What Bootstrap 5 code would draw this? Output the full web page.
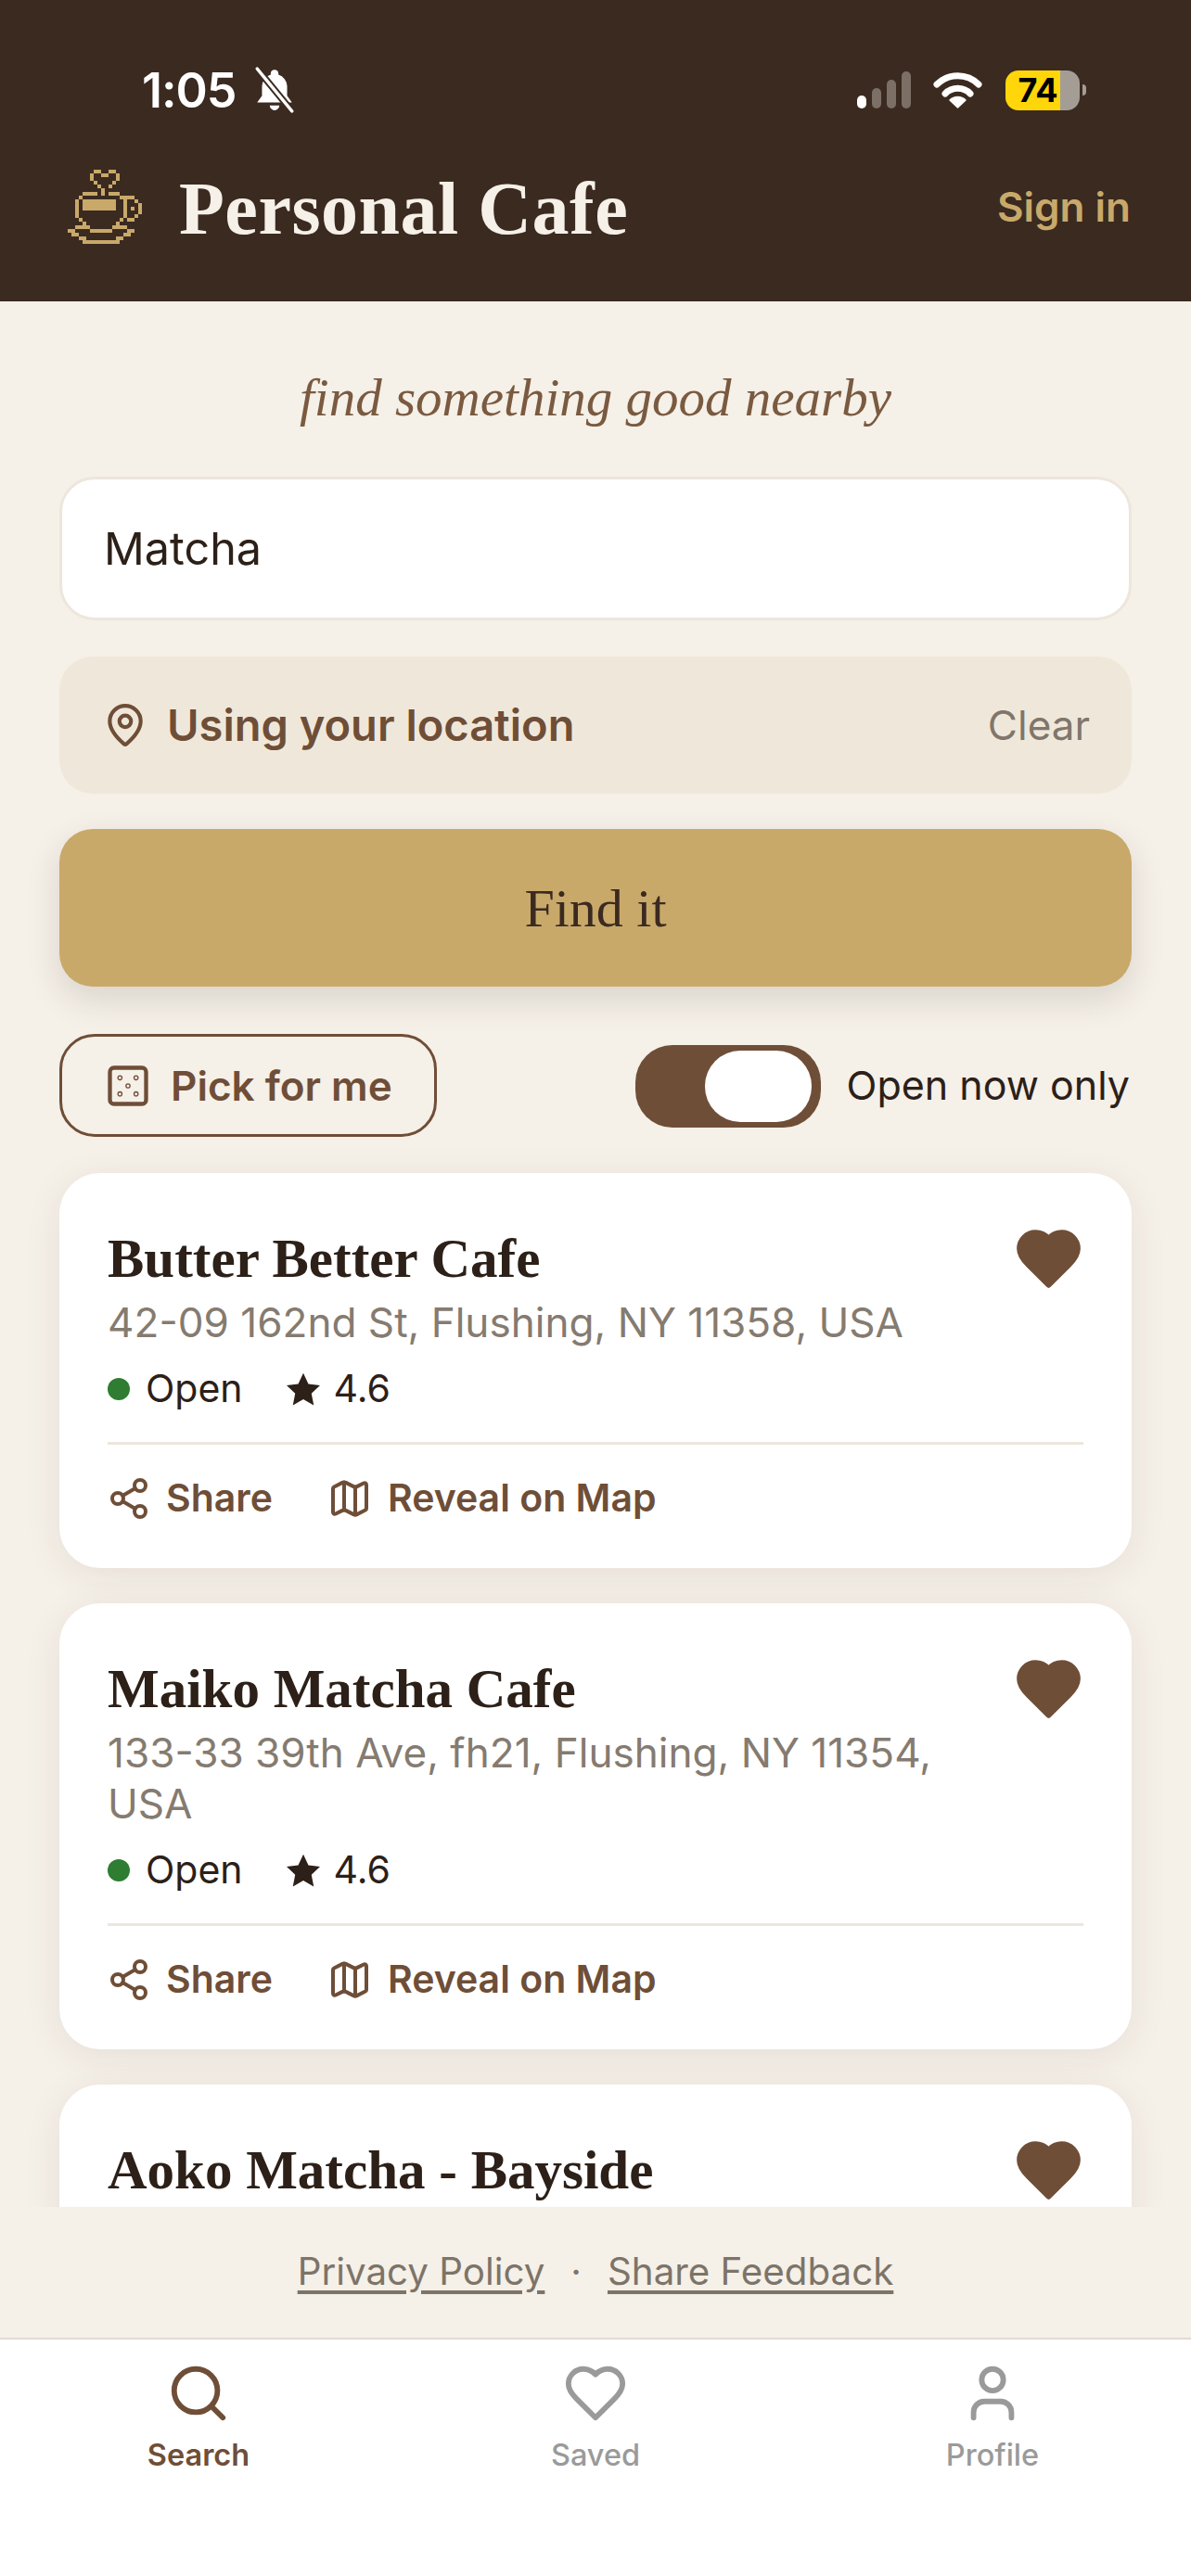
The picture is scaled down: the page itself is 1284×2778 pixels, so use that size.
<!DOCTYPE html>
<html lang="en">
<head>
  <meta charset="UTF-8">
  <title>Personal Cafe</title>
  <meta name="viewport" content="width=device-width, initial-scale=1" />
  <link rel="stylesheet" href="https://cdn.jsdelivr.net/npm/bootstrap@5.3.0/dist/css/bootstrap.min.css">
  <style>
    html, body { height: 2778px; overflow: hidden; }
    body { background: #f5f0e8; font-family: Inter, "Liberation Sans", sans-serif; color: #2c2018; }
    .serif { font-family: "Liberation Serif", serif; }
    .ico { fill: none; stroke: currentColor; stroke-width: 2; stroke-linecap: round; stroke-linejoin: round; flex-shrink: 0; }

    .app-shell { height: 2778px; }
    .top-bar { height: 325px; background: #3b2a20; color: #f5f0e8; }
    .status-row { height: 50px; margin-top: 72px; padding: 0 0 0 153px; }
    .status-time { font-size: 52px; font-weight: 600; line-height: 50px; letter-spacing: -1px; color: #fff; padding-top: 2px; }
    .signal-bar { width: 10px; border-radius: 5px; background: #7c6f66; }
    .batt { width: 80px; height: 43px; border-radius: 14px; overflow: hidden; background: linear-gradient(90deg, #ffd60a 74%, #a39d96 74%); color: #000; font-size: 36px; font-weight: 700; line-height: 43px; }
    .batt-nub { width: 4px; height: 12px; border-radius: 0 4px 4px 0; background: #a39d96; margin-left: 3px; }
    .brand-row { height: 80px; margin-top: 61px; padding: 0 65px 0 73px; }
    .brand-title { font-size: 80px; font-weight: 700; line-height: 80px; margin-left: 40px; padding-top: 4px; letter-spacing: .5px; }
    .sign-in { color: #c8a96a; font-size: 44px; font-weight: 600; text-decoration: none; }

    .scroll-area { height: 2055px; overflow: hidden; padding: 0 64px; }
    .tagline { font-size: 57px; font-style: italic; line-height: 80px; margin: 64px 0 45px; color: #7a5a40; }
    .search-input.form-control { height: 155px; border: 3px solid #ede6dc; border-radius: 38px; padding: 0 45px; font-size: 48.500px; color: #2c2018; background: #fff; }
    .loc-bar { height: 148px; margin-top: 39px; padding: 0 45px 0 46px; border-radius: 36px; background: #efe8da; color: #6f4e37; }
    .loc-text { font-size: 47px; font-weight: 600; margin-left: 20px; }
    .clear-link { font-size: 44px; color: #80766b; }
    .find-btn.btn { height: 170px; margin-top: 38px; border: 0; border-radius: 36px; background: #c8a96a; color: #3b2a20; font-size: 58px; box-shadow: 0 14px 36px rgba(59, 42, 32, .14); }
    .tools-row { height: 111px; margin-top: 51px; }
    .pick-btn.btn { height: 111px; width: 407px; padding: 0 0 0 45px; border: 3px solid #6f4e37; border-radius: 38px; color: #6f4e37; font-size: 44px; font-weight: 600; background: transparent; }
    .pick-btn span { margin-left: 20px; }
    .open-toggle { width: 200px; height: 89px; margin-top: 2px; border-radius: 40px; background: #6f4e37; position: relative; flex-shrink: 0; }
    .open-toggle::after { content: ""; position: absolute; right: 10px; top: 6px; width: 115px; height: 77px; border-radius: 38px; background: #fff; }
    .open-label { font-size: 43px; margin-left: 28px; padding-right: 2px; }

    .cafe-card.card { border: 0; border-radius: 44px; background: #fff; box-shadow: 0 8px 40px rgba(59, 42, 32, .08); padding: 57px 52px 50px; }
    .cafe-card + .cafe-card { margin-top: 38px; }
    .first-card { margin-top: 39px; }
    .cafe-name { font-size: 59px; font-weight: 700; line-height: 70px; color: #2c2018; margin: 0; }
    .cafe-addr { font-size: 44.100px; line-height: 55px; color: #857b70; margin: 7px 0 0; }
    .cafe-meta { height: 44px; margin-top: 22px; font-size: 41px; }
    .open-dot { width: 24px; height: 24px; border-radius: 50%; background: #2e7d32; margin-right: 17px; }
    .meta-star { margin: 0 14px 0 46px; }
    .fav-heart { color: #6f4e37; fill: #6f4e37; margin: -2px 0 0 0; }
    .cafe-rule { height: 3px; background: #ede6dc; margin: 35px 0 33px; }
    .cafe-act { font-size: 41px; font-weight: 600; color: #6f4e37; height: 50px; }
    .act-share { margin: 0 16px 0 -1px; }
    .act-map { margin: 0 17px 0 59px; }

    .foot-links { height: 141px; font-size: 40.300px; color: #7d7468; gap: 28px; }
    .foot-links a { color: inherit; text-underline-offset: 6px; }
    .tab-bar { height: 257px; background: #fff; border-top: 2px solid #e0dcd6; padding-top: 23px; }
    .tab-item { width: 428px; color: #9a9a9a; font-size: 32.500px; font-weight: 500; line-height: 44px; }
    .tab-item span { margin-top: 10px; }
    .tab-item.is-active { color: #6f4e37; font-weight: 600; }
  </style>
</head>
<body>
<div class="app-shell d-flex flex-column">

  <!-- header + status bar -->
  <header class="top-bar">
    <div class="status-row d-flex align-items-center">
      <span class="status-time">1:05</span>
      <svg class="ms-3" width="50" height="50" viewBox="0 0 24 24"><path fill="#fff" d="M12 1.500a2 2 0 0 0-2 2v.6A6.500 6.500 0 0 0 5.500 10v5l-2.500 3.500h18l-2.500-3.500v-5A6.500 6.500 0 0 0 14 4.100v-.6a2 2 0 0 0-2-2zM9.500 20a2.500 2.500 0 0 0 5 0z"/><path d="M3 1l18 22" stroke="#3b2a20" stroke-width="3.500"/><path d="M3 1l18 22" stroke="#fff" stroke-width="1.600" stroke-linecap="round"/></svg>
      <div class="d-flex align-items-end ms-auto" style="gap:6px;height:40px;margin-right:24px">
        <div class="signal-bar bg-white" style="height:14px"></div>
        <div class="signal-bar" style="height:22px"></div>
        <div class="signal-bar" style="height:31px"></div>
        <div class="signal-bar" style="height:40px"></div>
      </div>
      <svg width="53" height="40" viewBox="0 0 53 40"><path d="M4 14A32 32 0 0 1 49 14" fill="none" stroke="#fff" stroke-width="7" stroke-linecap="round"/><path d="M13 24A19 19 0 0 1 40 24" fill="none" stroke="#fff" stroke-width="7" stroke-linecap="round"/><path d="M26.500 39L18 31A12 12 0 0 1 35 31z" fill="#fff" stroke="#fff" stroke-width="1.500" stroke-linejoin="round"/></svg>
      <div class="batt text-center" style="margin-left:25px"><span style="margin-right:10px">74</span></div>
      <div class="batt-nub" style="margin-right:113px"></div>
    </div>
    <div class="brand-row d-flex align-items-center">
      <svg width="80" height="80" viewBox="0 0 20 20" shape-rendering="crispEdges" fill="#c8a96a">
        <path d="M7 0h2v1h-2zM11 0h2v1h-2zM6 1h1v2h-1zM9 1h2v1h-2zM13 1h1v2h-1zM7 3h1v1h-1zM12 3h1v1h-1zM8 4h1v1h-1zM11 4h1v1h-1zM9 5h1v2h-1z"/>
        <path d="M4 6h4v1h-4zM11 6h3v1h-3zM3 7h1v1h-1zM14 7h4v1h-4zM2 8h1v5h-1zM4 8h9v3h-9zM15 8h1v5h-1zM18 8h1v1h-1zM19 9h1v3h-1zM17 10h1v1h-1zM18 12h1v1h-1zM16 13h2v1h-2zM3 13h1v1h-1zM14 13h1v1h-1zM4 14h1v1h-1zM13 14h1v1h-1z"/>
        <path d="M2 15h3v1h-3zM5 15h1v1h-1zM12 15h4v1h-4zM0 16h2v1h-2zM6 16h6v1h-6zM16 16h2v1h-2zM1 17h2v1h-2zM15 17h2v1h-2zM3 18h2v1h-2zM13 18h2v1h-2zM4 19h10v1h-10z"/>
      </svg>
      <span class="brand-title serif">Personal Cafe</span>
      <a class="sign-in ms-auto" href="#">Sign in</a>
    </div>
  </header>

  <main class="scroll-area">
    <div class="tagline serif text-center">find something good nearby</div>
    <input class="search-input form-control" type="text" value="Matcha">

    <div class="loc-bar d-flex align-items-center">
      <svg class="ico" width="50" height="50" viewBox="0 0 24 24"><path d="M20 10c0 4.993-5.539 10.193-7.399 11.799a1 1 0 0 1-1.202 0C9.539 20.193 4 14.993 4 10a8 8 0 0 1 16 0"/><circle cx="12" cy="10" r="3"/></svg>
      <span class="loc-text">Using your location</span>
      <span class="clear-link ms-auto">Clear</span>
    </div>

    <button class="find-btn btn w-100 d-block serif" type="button">Find it</button>

    <div class="tools-row d-flex align-items-center justify-content-between">
      <button class="pick-btn btn d-flex align-items-center" type="button">
        <svg class="ico" width="52" height="52" viewBox="0 0 24 24"><rect x="3" y="3" width="18" height="18" rx="2"/><circle cx="8" cy="8" r=".3"/><circle cx="16" cy="8" r=".3"/><circle cx="12" cy="12" r=".3"/><circle cx="8" cy="16" r=".3"/><circle cx="16" cy="16" r=".3"/></svg>
        <span>Pick for me</span>
      </button>
      <label class="d-flex align-items-center">
        <span class="open-toggle"></span>
        <span class="open-label">Open now only</span>
      </label>
    </div>

    <div class="cafe-card card first-card">
      <div class="d-flex justify-content-between">
        <div>
          <h2 class="cafe-name serif">Butter Better Cafe</h2>
          <p class="cafe-addr">42-09 162nd St, Flushing, NY 11358, USA</p>
          <div class="cafe-meta d-flex align-items-center">
            <span class="open-dot"></span><span>Open</span>
            <svg class="meta-star" width="38" height="36" viewBox="0 0 24 23"><path fill="#2c2018" d="M12 .5l3.500 7.500 8 1-5.900 5.500 1.600 8.200L12 18.600l-7.200 4.100 1.600-8.200L.5 9l8-1z"/></svg>
            <span>4.6</span>
          </div>
        </div>
        <svg class="ico fav-heart" width="75" height="75" viewBox="0 0 24 24"><path d="M19 14c1.490-1.460 3-3.210 3-5.500A5.500 5.500 0 0 0 16.500 3c-1.760 0-3 .5-4.500 2-1.500-1.500-2.740-2-4.500-2A5.500 5.500 0 0 0 2 8.500c0 2.300 1.500 4.050 3 5.500l7 7Z"/></svg>
      </div>
      <div class="cafe-rule"></div>
      <div class="cafe-act d-flex align-items-center">
        <svg class="ico act-share" width="48" height="48" viewBox="0 0 24 24"><circle cx="18" cy="5" r="3"/><circle cx="6" cy="12" r="3"/><circle cx="18" cy="19" r="3"/><path d="M8.590 13.510l6.830 3.980M15.410 6.510l-6.820 3.980"/></svg>
        <span>Share</span>
        <svg class="ico act-map" width="48" height="48" viewBox="0 0 24 24"><path d="M14.106 5.553a2 2 0 0 0 1.788 0l3.659-1.830A1 1 0 0 1 21 4.619v12.764a1 1 0 0 1-.553.894l-4.553 2.277a2 2 0 0 1-1.788 0l-4.212-2.106a2 2 0 0 0-1.788 0l-3.659 1.830A1 1 0 0 1 3 19.381V6.618a1 1 0 0 1 .553-.894l4.553-2.277a2 2 0 0 1 1.788 0z"/><path d="M15 5.764v15M9 3.236v15"/></svg>
        <span>Reveal on Map</span>
      </div>
    </div>

    <div class="cafe-card card">
      <div class="d-flex justify-content-between">
        <div>
          <h2 class="cafe-name serif">Maiko Matcha Cafe</h2>
          <p class="cafe-addr">133-33 39th Ave, fh21, Flushing, NY 11354, USA</p>
          <div class="cafe-meta d-flex align-items-center">
            <span class="open-dot"></span><span>Open</span>
            <svg class="meta-star" width="38" height="36" viewBox="0 0 24 23"><path fill="#2c2018" d="M12 .5l3.500 7.500 8 1-5.900 5.500 1.600 8.200L12 18.600l-7.200 4.100 1.600-8.200L.5 9l8-1z"/></svg>
            <span>4.6</span>
          </div>
        </div>
        <svg class="ico fav-heart" width="75" height="75" viewBox="0 0 24 24"><path d="M19 14c1.490-1.460 3-3.210 3-5.500A5.500 5.500 0 0 0 16.500 3c-1.760 0-3 .5-4.500 2-1.500-1.500-2.740-2-4.500-2A5.500 5.500 0 0 0 2 8.500c0 2.300 1.500 4.050 3 5.500l7 7Z"/></svg>
      </div>
      <div class="cafe-rule"></div>
      <div class="cafe-act d-flex align-items-center">
        <svg class="ico act-share" width="48" height="48" viewBox="0 0 24 24"><circle cx="18" cy="5" r="3"/><circle cx="6" cy="12" r="3"/><circle cx="18" cy="19" r="3"/><path d="M8.590 13.510l6.830 3.980M15.410 6.510l-6.820 3.980"/></svg>
        <span>Share</span>
        <svg class="ico act-map" width="48" height="48" viewBox="0 0 24 24"><path d="M14.106 5.553a2 2 0 0 0 1.788 0l3.659-1.830A1 1 0 0 1 21 4.619v12.764a1 1 0 0 1-.553.894l-4.553 2.277a2 2 0 0 1-1.788 0l-4.212-2.106a2 2 0 0 0-1.788 0l-3.659 1.830A1 1 0 0 1 3 19.381V6.618a1 1 0 0 1 .553-.894l4.553-2.277a2 2 0 0 1 1.788 0z"/><path d="M15 5.764v15M9 3.236v15"/></svg>
        <span>Reveal on Map</span>
      </div>
    </div>

    <div class="cafe-card card">
      <div class="d-flex justify-content-between">
        <div>
          <h2 class="cafe-name serif">Aoko Matcha - Bayside</h2>
        </div>
        <svg class="ico fav-heart" width="75" height="75" viewBox="0 0 24 24"><path d="M19 14c1.490-1.460 3-3.210 3-5.500A5.500 5.500 0 0 0 16.500 3c-1.760 0-3 .5-4.500 2-1.500-1.500-2.740-2-4.500-2A5.500 5.500 0 0 0 2 8.500c0 2.300 1.500 4.050 3 5.500l7 7Z"/></svg>
      </div>
    </div>
  </main>

  <div class="foot-links d-flex align-items-center justify-content-center">
    <a href="#">Privacy Policy</a><span>·</span><a href="#">Share Feedback</a>
  </div>

  <nav class="tab-bar d-flex">
    <div class="tab-item is-active d-flex flex-column align-items-center">
      <svg class="ico" width="70" height="70" viewBox="0 0 24 24"><circle cx="11" cy="11" r="8"/><path d="M21 21l-4.300-4.300"/></svg>
      <span>Search</span>
    </div>
    <div class="tab-item d-flex flex-column align-items-center">
      <svg class="ico" width="70" height="70" viewBox="0 0 24 24"><path d="M19 14c1.490-1.460 3-3.210 3-5.500A5.500 5.500 0 0 0 16.500 3c-1.760 0-3 .5-4.500 2-1.500-1.500-2.740-2-4.500-2A5.500 5.500 0 0 0 2 8.500c0 2.300 1.500 4.050 3 5.500l7 7Z"/></svg>
      <span>Saved</span>
    </div>
    <div class="tab-item d-flex flex-column align-items-center">
      <svg class="ico" width="70" height="70" viewBox="0 0 24 24"><path d="M19 21v-2a4 4 0 0 0-4-4H9a4 4 0 0 0-4 4v2"/><circle cx="12" cy="7" r="4"/></svg>
      <span>Profile</span>
    </div>
  </nav>
</div>

<script src="https://cdn.jsdelivr.net/npm/bootstrap@5.3.0/dist/js/bootstrap.bundle.min.js"></script>
</body>
</html>
